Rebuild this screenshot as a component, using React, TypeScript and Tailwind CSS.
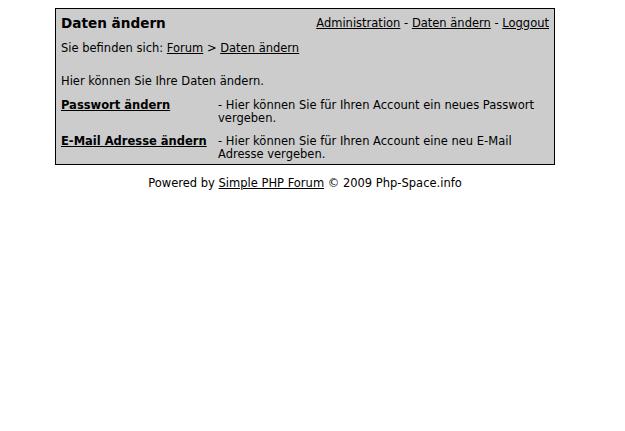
import React from 'react';

export default function App() {
  return (
    <div className="w-[610px] min-h-[431px] bg-white text-black text-[11.5px] leading-[13px] font-['DejaVu_Sans',Verdana,sans-serif]">
      <div className="pt-2">
        <div className="mx-auto w-[500px] border border-black bg-[#cccccc] px-[5px] pt-[6px] pb-[3px]">
          {/* Kopfzeile */}
          <div className="flex items-start justify-between">
            <h1 className="text-[13.6px] leading-[17px] font-bold">Daten ändern</h1>
            <div className="pt-[2px]">
              <a className="underline">Administration</a> - <a className="underline">Daten ändern</a> - <a className="underline">Loggout</a>
            </div>
          </div>
          <p className="mt-[10px]">
            Sie befinden sich: <a className="underline">Forum</a> &gt; <a className="underline">Daten ändern</a>
          </p>

          <p className="mt-[20px]">Hier können Sie Ihre Daten ändern.</p>

          <div className="mt-[11px] flex flex-col gap-[10px]">
            <div className="flex">
              <a className="w-[157px] shrink-0 font-bold underline">Passwort ändern</a>
              <span className="pr-[6px]">- Hier können Sie für Ihren Account ein neues Passwort vergeben.</span>
            </div>
            <div className="flex">
              <a className="w-[157px] shrink-0 font-bold underline">E-Mail Adresse ändern</a>
              <span className="pr-[6px]">- Hier können Sie für Ihren Account eine neu E-Mail Adresse vergeben.</span>
            </div>
          </div>
        </div>
        <p className="mt-[12px] text-center">
          Powered by <a className="underline">Simple PHP Forum</a> © 2009 Php-Space.info
        </p>
      </div>
    </div>
  );
}
